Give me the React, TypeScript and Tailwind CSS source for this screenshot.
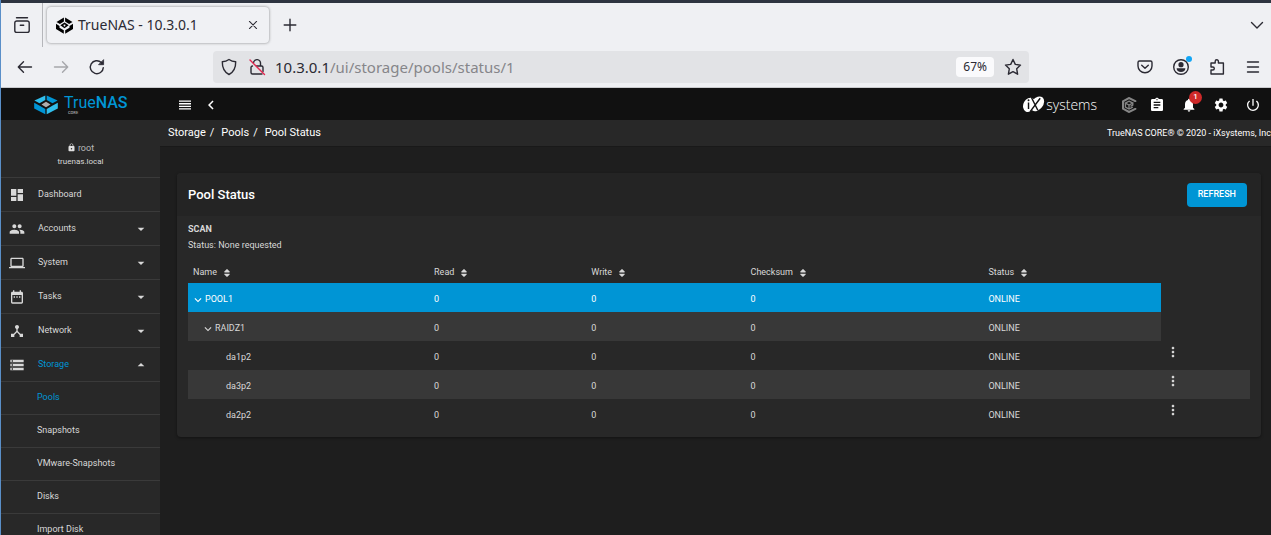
import type { ReactNode } from "react";
import type { IconType } from "react-icons";
import {
  MdArrowDropDown,
  MdArrowDropUp,
  MdAssignment,
  MdChevronLeft,
  MdDashboard,
  MdDateRange,
  MdDeviceHub,
  MdExpandMore,
  MdLaptop,
  MdLock,
  MdMoreVert,
  MdNotifications,
  MdPeople,
  MdPowerSettingsNew,
  MdSettings,
  MdStorage,
} from "react-icons/md";
import { FaSort } from "react-icons/fa";

const UI_FONT = "font-['Noto_Sans',sans-serif]";

function IconButton({ label, className = "", children }: { label: string; className?: string; children: ReactNode }) {
  return (
    <button type="button" aria-label={label} className={`flex shrink-0 items-center justify-center ${className}`}>
      {children}
    </button>
  );
}

function Stroke({ size = 18, className = "", children }: { size?: number; className?: string; children: ReactNode }) {
  return (
    <svg
      width={size}
      height={size}
      viewBox="0 0 18 18"
      fill="none"
      stroke="currentColor"
      strokeWidth="1.4"
      strokeLinecap="round"
      strokeLinejoin="round"
      className={`shrink-0 ${className}`}
      aria-hidden="true"
    >
      {children}
    </svg>
  );
}

function Favicon() {
  return (
    <svg width="17" height="17" viewBox="0 0 17 17" className="shrink-0 text-black" fill="currentColor" aria-hidden="true">
      <path d="M7.900 .4v4.200L3.900 7 .5 4.900zM9.100 .4v4.200L13.100 7l3.400-2.100z" />
      <path d="M0 6.700l3.500 2.200v1.800l4.300 2.600v3.400L0 12zM17 6.700l-3.500 2.200v1.800l-4.300 2.600v3.400L17 12z" />
      <path fillRule="evenodd" d="M8.500 5.600l4.200 2.700-4.200 2.900-4.200-2.900zM8.500 7.600a.9.9 0 1 0 .01 0z" />
    </svg>
  );
}

function BrowserChrome() {
  return (
    <div className={`${UI_FONT} shrink-0 bg-[#eff0f3] text-[#2b2a33]`}>
      <div className="h-[3px] bg-[#2e3440]" />
      <div className="flex h-11 items-center">
        <div className="flex h-full w-[42px] shrink-0 items-center justify-center border-r border-[#b5b6ba]">
          <IconButton label="Recent browsing">
            <Stroke size={18}>
              <path d="M3.500 1.800h11M1.800 7a2 2 0 0 1 2-2h10.400a2 2 0 0 1 2 2v7.400a2 2 0 0 1-2 2H3.800a2 2 0 0 1-2-2zM7.300 9.200h3.400" />
            </Stroke>
          </IconButton>
        </div>
        <div className="ml-1 flex h-9 w-[222px] items-center rounded bg-[#f0f1f4] pr-2 pl-[9px] shadow-[0_0_3px_rgba(0,0,0,0.45)]">
          <Favicon />
          <span className="ml-[5px] grow text-sm whitespace-nowrap">TrueNAS - 10.3.0.1</span>
          <IconButton label="Close tab">
            <Stroke size={16}>
              <path d="M5 5l8 8M13 5l-8 8" strokeWidth="1.200" />
            </Stroke>
          </IconButton>
        </div>
        <IconButton label="New tab" className="ml-3">
          <Stroke size={18}>
            <path d="M9 3.200v11.600M3.200 9h11.600" />
          </Stroke>
        </IconButton>
        <IconButton label="List all tabs" className="mr-[5px] ml-auto">
          <Stroke size={18}>
            <path d="M3.500 6.500L9 12l5.500-5.500" />
          </Stroke>
        </IconButton>
      </div>
      <div className="flex h-[41px] items-center border-b border-[#c9cacd]">
        <IconButton label="Back" className="ml-[15px]">
          <Stroke>
            <path d="M15.500 9H2.500M7.500 3.800L2.300 9l5.200 5.200" />
          </Stroke>
        </IconButton>
        <IconButton label="Forward" className="ml-[18px] text-[#a6a7ab]">
          <Stroke>
            <path d="M2.500 9h13M10.500 3.800L15.700 9l-5.200 5.200" />
          </Stroke>
        </IconButton>
        <IconButton label="Reload" className="ml-[18px]">
          <Stroke>
            <path d="M15.300 9.600A6.500 6.500 0 1 1 13.300 4.500" />
            <path d="M15.600 2v4.700h-4.700z" fill="currentColor" strokeWidth=".8" />
          </Stroke>
        </IconButton>
        <div className="mr-[107px] ml-[107px] flex h-8 grow items-center rounded bg-[#e2e3e6] pr-[7px] pl-[7px]">
          <Stroke size={18}>
            <path d="M9 1.500c2.200 1.500 4.200 2.100 6.700 2.300.1 5.900-1.900 10.300-6.700 12.700C4.200 14.100 2.200 9.700 2.300 3.800 4.800 3.600 6.800 3 9 1.500z" />
          </Stroke>
          <Stroke size={18} className="ml-[10px]">
            <path d="M5.500 4.800a3.500 3.500 0 0 1 7 .7V8M8.500 8h5A1.500 1.500 0 0 1 15 9.500v4M14 16H4.500A1.500 1.500 0 0 1 3 14.500v-5A1.500 1.500 0 0 1 4.500 8" />
            <path d="M2 2l14.500 14.500" stroke="#e22850" />
          </Stroke>
          <div className="relative ml-[9px] h-6 min-w-0 grow">
            <div aria-hidden="true" className="text-[15px] leading-6 whitespace-nowrap text-[#86868a]">
              <span className="text-[#2b2a33]">10.3.0.1</span>/ui/storage/pools/status/1
            </div>
            <input
              type="text"
              aria-label="Address"
              className="absolute inset-0 w-full bg-transparent text-[15px] text-transparent outline-none"
            />
          </div>
          <button type="button" className="h-5 rounded-sm bg-[#fafafc] px-[7px] text-xs">
            67%
          </button>
          <IconButton label="Bookmark" className="ml-[10px]">
            <Stroke size={18}>
              <path d="M9 1.500l2.300 4.900 5.200.7-3.800 3.700.9 5.400L9 13.600l-4.600 2.600.9-5.400L1.500 7.100l5.200-.7z" />
            </Stroke>
          </IconButton>
        </div>
        <div className="mr-[9px] flex items-center gap-[18px]">
          <IconButton label="Save to Pocket">
            <Stroke size={18}>
              <path d="M3.500 3h11a1.500 1.500 0 0 1 1.500 1.500V8a7 6.800 0 0 1-14 0V4.500A1.500 1.500 0 0 1 3.500 3zM5.700 7.200L9 10.300l3.300-3.100" />
            </Stroke>
          </IconButton>
          <IconButton label="Account" className="relative">
            <Stroke size={18}>
              <circle cx="9" cy="9" r="7.300" />
              <circle cx="9" cy="6.700" r="2.600" fill="currentColor" stroke="none" />
              <path d="M4.600 10.300h8.800c0 2.200-1.700 3.700-4.400 3.700s-4.400-1.500-4.400-3.700z" fill="currentColor" stroke="none" />
            </Stroke>
            <span className="absolute -top-0.5 -right-0.5 size-[6px] rounded-full bg-[#12a5f5]" />
          </IconButton>
          <IconButton label="Extensions">
            <Stroke size={18}>
              <path d="M3 5h4.200V3.300a1.600 1.600 0 0 1 3.200 0V5h5v11H3v-4h1.800a1.500 1.500 0 0 0 0-3H3z" />
            </Stroke>
          </IconButton>
          <IconButton label="Application menu">
            <Stroke size={18}>
              <path d="M3.500 4h11M3.500 9h11M3.500 14h11" />
            </Stroke>
          </IconButton>
        </div>
      </div>
    </div>
  );
}

function TrueNasLogo() {
  return (
    <a href="#dashboard" aria-label="TrueNAS CORE" className="flex items-center gap-[6px] pl-[33px]">
      <svg width="24" height="20" viewBox="0 0 24 20" className="shrink-0" aria-hidden="true">
        <path d="M11.300 .4v4.700L5.500 8.300.4 5.600z" fill="#31beec" />
        <path d="M12.700 .4v4.700l5.800 3.200 5.100-2.700z" fill="#0095d5" />
        <path d="M.2 7.800l4.600 2.500 6.500 3.600v5.300L.2 13.500z" fill="#0095d5" />
        <path d="M23.800 7.800l-4.600 2.500-6.500 3.600v5.300l11.100-5.700z" fill="#31beec" />
        <path d="M12 6.800l4.500 2.600L12 12.200 7.500 9.400z" fill="#aeadae" />
      </svg>
      <span className="flex flex-col font-['Roboto',sans-serif] text-base leading-4 text-[#0095d5]">
        <span>
          True<b className="font-medium">NAS</b>
        </span>
        <span className="ml-1 text-[4px] leading-[4px] font-medium text-[#aeadae]">CORE</span>
      </span>
    </a>
  );
}

function IxSystemsLogo() {
  return (
    <a href="#ixsystems" aria-label="iXsystems" className="flex items-center text-white">
      <svg width="23" height="19" viewBox="0 0 24 19" className="shrink-0" aria-hidden="true">
        <ellipse cx="7.500" cy="9.800" rx="6" ry="7.800" transform="rotate(28 7.500 9.800)" fill="#fff" />
        <ellipse cx="16" cy="8.800" rx="6" ry="8.600" transform="rotate(38 16 8.800)" fill="#fff" />
        <path d="M6.800 7.300v7M10 2.500l6.500 13M19 3L8.500 17" stroke="#111" strokeWidth="1.500" fill="none" />
        <circle cx="6.800" cy="5" r="1" fill="#111" />
      </svg>
      <span className="ml-px font-['Open_Sans',sans-serif] text-sm leading-5 font-light">systems</span>
    </a>
  );
}

function CommandCubeIcon() {
  return (
    <svg width="16" height="16" viewBox="0 0 16 16" className="text-[#858585]" fill="none" stroke="currentColor" aria-hidden="true">
      <path d="M14.300 5V4.200L8 1 2 4.300v7.400L8 15l6.300-3.200V11" strokeWidth="2" />
      <path d="M8 4.200l3.800 1.900L8 8 4.400 6.100zM4.400 6.100v4L8 12l3.800-1.900M8 8v4M11.800 6.100v2L9.500 9.300" strokeWidth="1.300" />
    </svg>
  );
}

function TopBar() {
  return (
    <header className="flex h-8 shrink-0 items-center bg-[#111] pt-px text-white">
      <div className="w-[159px] shrink-0">
        <TrueNasLogo />
      </div>
      <IconButton label="Toggle menu" className="ml-4">
        <svg width="18" height="18" viewBox="0 0 18 18" fill="currentColor" aria-hidden="true">
          <path d="M3 4.500h12v1.300H3zM3 7.100h12v1.300H3zM3 9.700h12V11H3zM3 12.300h12v1.300H3z" />
        </svg>
      </IconButton>
      <IconButton label="Collapse" className="ml-2">
        <MdChevronLeft size={18} />
      </IconButton>
      <div className="mr-[10px] ml-auto flex items-center">
        <IxSystemsLogo />
        <div className="ml-6 flex items-center gap-3">
          <IconButton label="TrueCommand">
            <CommandCubeIcon />
          </IconButton>
          <IconButton label="Tasks">
            <MdAssignment size={16} />
          </IconButton>
        </div>
        <div className="ml-4 flex items-center gap-4">
          <IconButton label="Alerts" className="relative">
            <MdNotifications size={16} />
            <span className="absolute -top-[6px] -right-[5px] flex size-[13px] items-center justify-center rounded-full bg-[#ce2929] text-[8px] font-medium">
              1
            </span>
          </IconButton>
          <IconButton label="Settings">
            <MdSettings size={16} />
          </IconButton>
          <IconButton label="Power">
            <MdPowerSettingsNew size={16} />
          </IconButton>
        </div>
      </div>
    </header>
  );
}

const NAV: { label: string; icon: IconType; expandable?: boolean; open?: boolean }[] = [
  { label: "Dashboard", icon: MdDashboard },
  { label: "Accounts", icon: MdPeople, expandable: true },
  { label: "System", icon: MdLaptop, expandable: true },
  { label: "Tasks", icon: MdDateRange, expandable: true },
  { label: "Network", icon: MdDeviceHub, expandable: true },
  { label: "Storage", icon: MdStorage, expandable: true, open: true },
];

const STORAGE_PAGES = ["Pools", "Snapshots", "VMware-Snapshots", "Disks", "Import Disk"];

function Sidebar() {
  return (
    <aside className="w-[159px] shrink-0 bg-[#282828] text-[9px] text-[#d8d8d8]">
      <div className="flex h-[57px] flex-col items-center justify-center pt-3">
        <div className="flex items-center gap-[2px] leading-[14px] text-[#b8b8b8]">
          <MdLock size={9} className="text-[#e0e0e0]" />
          root
        </div>
        <div className="text-[8px] leading-[14px]">truenas.local</div>
      </div>
      <nav>
        {NAV.map(({ label, icon: Icon, expandable, open }) => (
          <a
            key={label}
            href={`#${label.toLowerCase()}`}
            className="flex h-[34px] items-center border-t border-[#3a3a3a] pr-[11px] pl-2"
          >
            <Icon size={16} className="shrink-0" />
            <span className={`ml-[13px] grow ${open ? "text-[#0095d5]" : ""}`}>{label}</span>
            {expandable && (open ? <MdArrowDropUp size={16} /> : <MdArrowDropDown size={16} />)}
          </a>
        ))}
        {STORAGE_PAGES.map((label) => (
          <a
            key={label}
            href={`#${label.toLowerCase()}`}
            className={`flex h-[33px] items-center border-t border-[#3a3a3a] pl-9 ${label === "Pools" ? "text-[#0095d5]" : ""}`}
          >
            {label}
          </a>
        ))}
      </nav>
    </aside>
  );
}

function Breadcrumbs() {
  return (
    <div className="flex h-[27px] items-center justify-between border-b border-[#191919] bg-[#282828] pt-px pl-2 text-white">
      <nav aria-label="Breadcrumb" className="flex items-center text-[11px]">
        <a href="#storage">Storage</a>
        <span className="mr-[7px] ml-1">/</span>
        <a href="#pools">Pools</a>
        <span className="mr-[7px] ml-1">/</span>
        <a href="#status">Pool Status</a>
      </nav>
      <div className="text-[9px] whitespace-nowrap">TrueNAS CORE® © 2020 - iXsystems, Inc</div>
    </div>
  );
}

const COLUMNS = ["Name", "Read", "Write", "Checksum", "Status"];

const ROWS = [
  { name: "POOL1", depth: 0, bg: "bg-[#0095d5] text-white" },
  { name: "RAIDZ1", depth: 1, bg: "bg-[#383838]" },
  { name: "da1p2", depth: 2, bg: "" },
  { name: "da3p2", depth: 2, bg: "bg-[#383838]" },
  { name: "da2p2", depth: 2, bg: "" },
];

function PoolTable() {
  return (
    <table className="w-full table-fixed border-collapse text-left text-[9px]">
      <colgroup>
        <col className="w-[22.7%]" />
        <col className="w-[14.8%]" />
        <col className="w-[15%]" />
        <col className="w-[22.4%]" />
        <col className="w-[16.7%]" />
        <col className="w-[8.4%]" />
      </colgroup>
      <thead>
        <tr className="h-5">
          {COLUMNS.map((name) => (
            <th key={name} scope="col" className="pl-[5px] font-normal">
              <button type="button" className="flex items-center gap-[5px]">
                {name}
                <FaSort size={10} />
              </button>
            </th>
          ))}
          <td />
        </tr>
      </thead>
      <tbody>
        {ROWS.map(({ name, depth, bg }) => (
          <tr key={name} className="h-[29px]">
            <td className={`${bg} pt-1 ${depth === 0 ? "pl-[3px]" : depth === 1 ? "pl-[13px]" : "pl-[38px]"}`}>
              {depth < 2 ? (
                <button type="button" aria-expanded="true" className="flex items-center">
                  <MdExpandMore size={14} />
                  {name}
                </button>
              ) : (
                name
              )}
            </td>
            <td className={`${bg} pt-1 pl-[5px]`}>0</td>
            <td className={`${bg} pt-1 pl-[5px]`}>0</td>
            <td className={`${bg} pt-1 pl-[5px]`}>0</td>
            <td className={`${bg} pt-1 pl-[5px]`}>ONLINE</td>
            {depth === 2 ? (
              <td className={`${bg} pb-2 pl-1`}>
                <IconButton label={`${name} options`}>
                  <MdMoreVert size={16} />
                </IconButton>
              </td>
            ) : (
              <td />
            )}
          </tr>
        ))}
      </tbody>
    </table>
  );
}

function PoolStatusCard() {
  return (
    <section className="rounded bg-[#282828] text-[#d8d8d8] shadow-[0_1px_3px_rgba(0,0,0,0.4)]">
      <div className="flex h-[43px] items-center justify-between rounded-t bg-[#242424] pr-[14px] pl-[11px]">
        <h1 className="text-[13px] font-medium text-white">Pool Status</h1>
        <button type="button" className="h-6 rounded-sm bg-[#0095d5] px-[11px] text-[9px] font-medium text-white">
          REFRESH
        </button>
      </div>
      <div className="px-[11px] pt-[5px] pb-[9px]">
        <div className="text-[9px] leading-4">
          <h2 className="font-bold">SCAN</h2>
          <p>Status: None requested</p>
        </div>
        <div className="mt-[10px]">
          <PoolTable />
        </div>
      </div>
    </section>
  );
}

export default function App() {
  return (
    <div className="flex h-screen flex-col overflow-hidden border-l border-[#5a8fc8] bg-[#1e1e1e]">
      <BrowserChrome />
      <div className="flex min-h-0 grow flex-col font-['Roboto',sans-serif]">
        <TopBar />
        <div className="flex min-h-0 grow overflow-hidden">
          <Sidebar />
          <main className="min-w-0 grow">
            <Breadcrumbs />
            <div className="pt-[26px] pr-[10px] pl-[17px]">
              <PoolStatusCard />
            </div>
          </main>
        </div>
      </div>
    </div>
  );
}
